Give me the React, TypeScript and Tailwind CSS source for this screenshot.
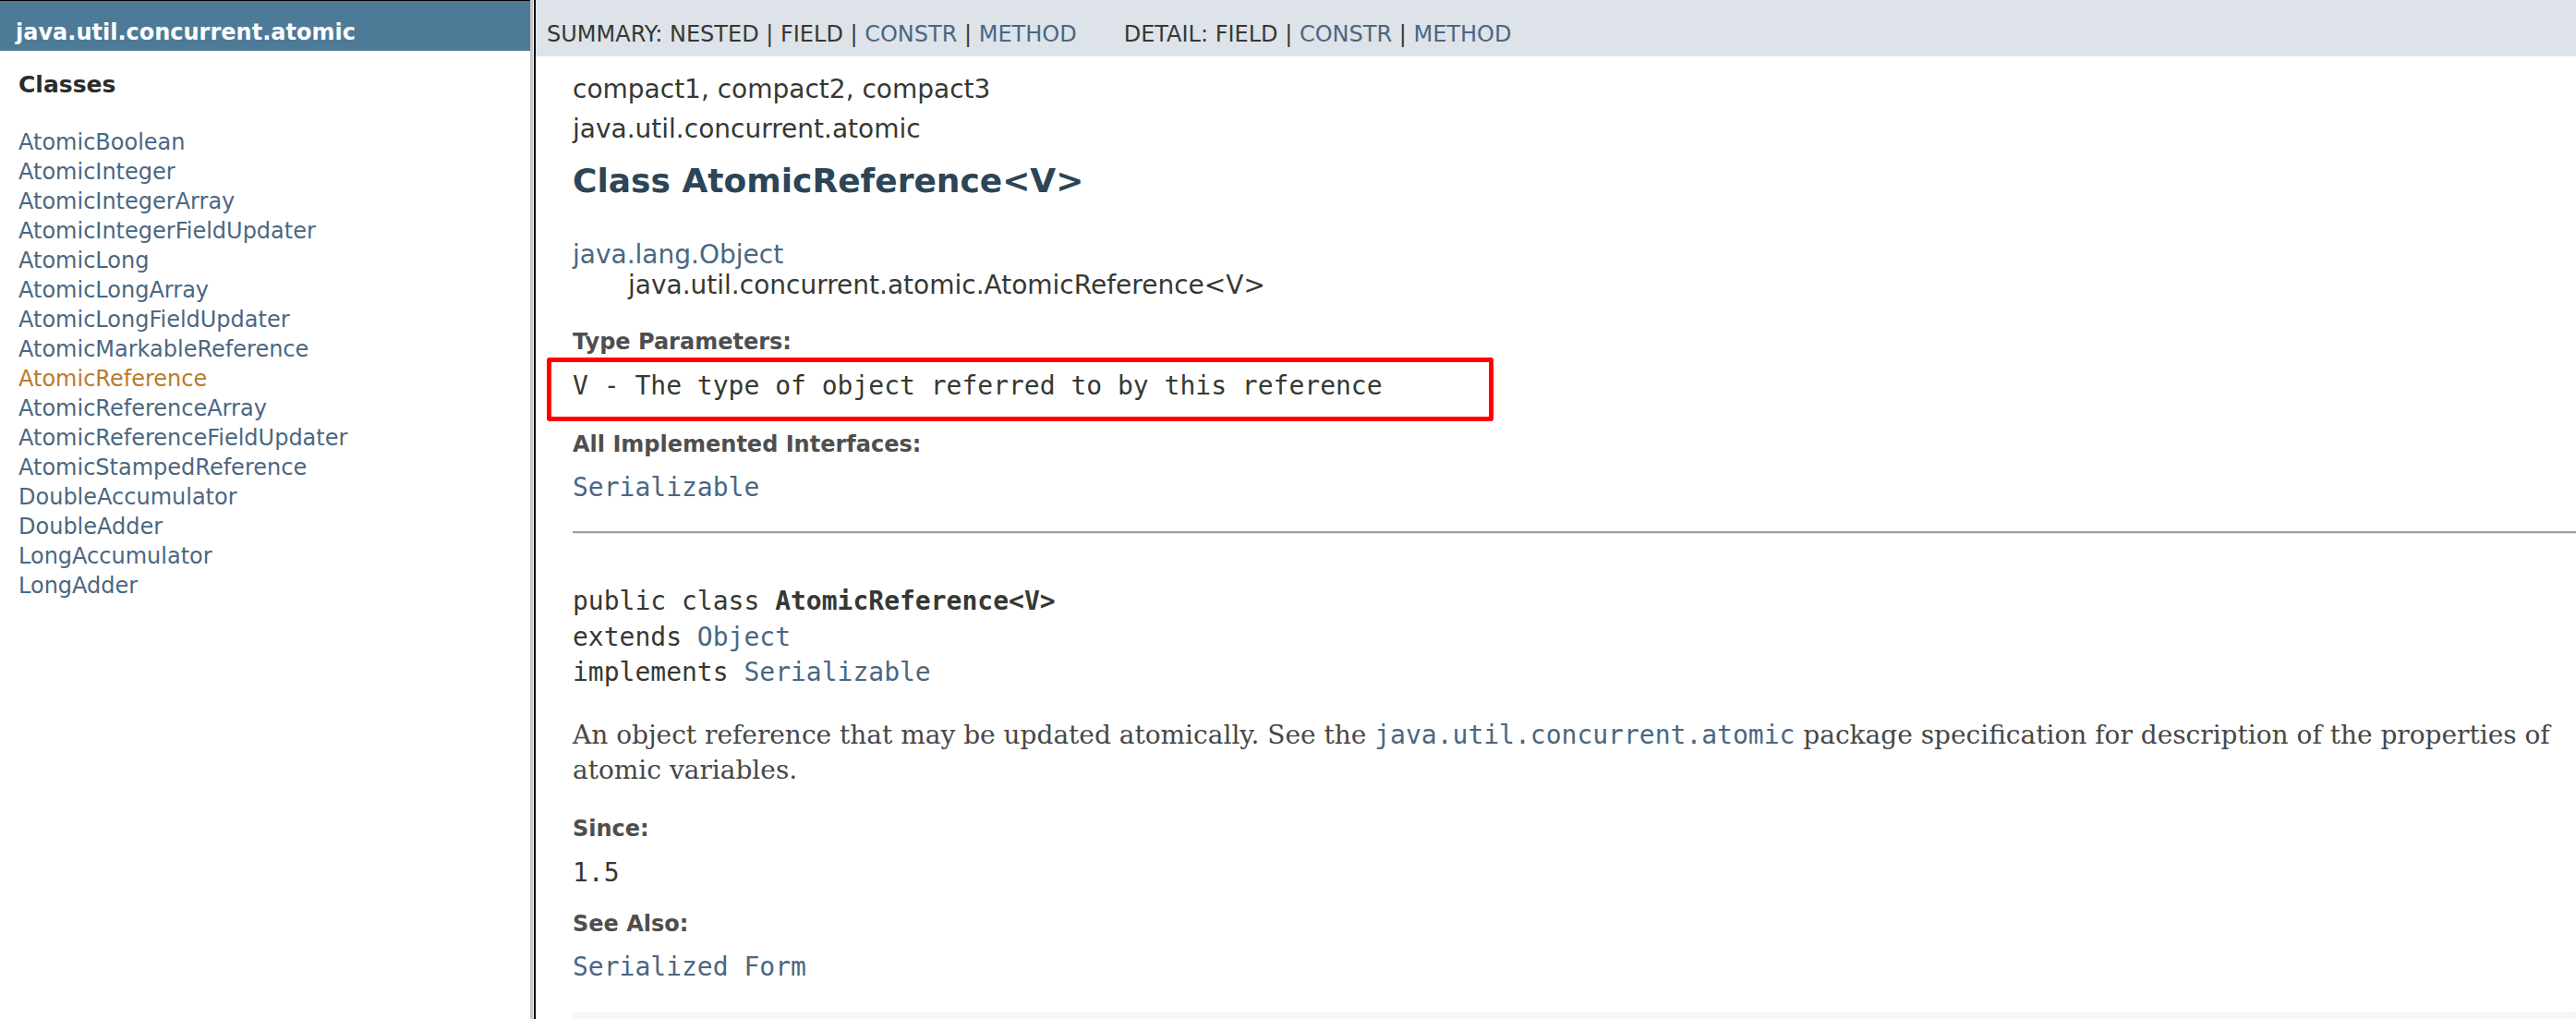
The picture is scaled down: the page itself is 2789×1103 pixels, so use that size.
import React from 'react';

const CLASSES = [
  'AtomicBoolean',
  'AtomicInteger',
  'AtomicIntegerArray',
  'AtomicIntegerFieldUpdater',
  'AtomicLong',
  'AtomicLongArray',
  'AtomicLongFieldUpdater',
  'AtomicMarkableReference',
  'AtomicReference',
  'AtomicReferenceArray',
  'AtomicReferenceFieldUpdater',
  'AtomicStampedReference',
  'DoubleAccumulator',
  'DoubleAdder',
  'LongAccumulator',
  'LongAdder',
];

const mono = "font-['DejaVu_Sans_Mono','Liberation_Mono',monospace]";

function Label({ children, className = '' }: { children: React.ReactNode; className?: string }) {
  return <dt className={`text-[24px] font-bold leading-[28px] text-[#4e4e4e] ${className}`}>{children}</dt>;
}

export default function App() {
  return (
    <div className="flex h-[1103px] w-[2789px] overflow-hidden bg-white font-['DejaVu_Sans','Liberation_Sans',sans-serif] text-[#353833]">
      {/* Package frame */}
      <aside className="w-[574px] shrink-0 border-t border-black">
        <div className="h-[54px] bg-[#4d7a97] pl-[17px] pt-[20px] text-[24px] font-bold leading-[28px] text-white">
          java.util.concurrent.atomic
        </div>
        <h2 className="mt-[22px] pl-[20px] text-[25px] font-bold leading-[29px] text-[#2c2c2c]">Classes</h2>
        <ul className="mt-[30px] pl-[20px]">
          {CLASSES.map(c => (
            <li
              key={c}
              className={`pt-[4px] text-[24px] leading-[28px] ${c === 'AtomicReference' ? 'text-[#bb7a2a]' : 'text-[#4a6782]'}`}
            >
              {c}
            </li>
          ))}
        </ul>
      </aside>

      {/* Frame divider */}
      <div className="w-[3px] shrink-0 bg-[#c8c8c8]" />
      <div className="w-px shrink-0 bg-white" />
      <div className="w-[2px] shrink-0 bg-black" />

      {/* Class frame */}
      <main className="min-w-0 flex-1">
        <div className="flex h-[61px] gap-[51px] bg-[#dee3e9] pl-[12px] pt-[23px] text-[24px] leading-[28px] whitespace-pre">
          <div>
            SUMMARY: NESTED | FIELD | <span className="text-[#4a6782]">CONSTR</span> | <span className="text-[#4a6782]">METHOD</span>
          </div>
          <div>
            DETAIL: FIELD | <span className="text-[#4a6782]">CONSTR</span> | <span className="text-[#4a6782]">METHOD</span>
          </div>
        </div>

        <div className="pl-[40px]">
          <div className="mt-[19px] text-[28px] leading-[33px]">compact1, compact2, compact3</div>
          <div className="mt-[10px] text-[28px] leading-[33px]">java.util.concurrent.atomic</div>
          <h1 className="mt-[19px] text-[36px] font-bold leading-[42px] text-[#2c4557]">Class AtomicReference&lt;V&gt;</h1>

          <div className="mt-[42px] text-[28px] leading-[33px] text-[#4a6782]">java.lang.Object</div>
          <div className="ml-[60px] text-[28px] leading-[33px]">java.util.concurrent.atomic.AtomicReference&lt;V&gt;</div>

          <dl>
            <Label className="mt-[31px]">Type Parameters:</Label>
            <dd className={`relative mt-[17px] text-[28px] leading-[33px] ${mono}`}>
              V - The type of object referred to by this reference
              <span className="absolute left-[-28px] top-[-14px] h-[69px] w-[1025px] rounded-[3px] border-[5px] border-[#ff0000]" />
            </dd>
            <Label className="mt-[33px]">All Implemented Interfaces:</Label>
            <dd className={`mt-[16px] text-[28px] leading-[33px] text-[#4a6782] ${mono}`}>Serializable</dd>
          </dl>

          <div className="mt-[31px] h-[3px] border-t-2 border-[#9d9d9d] bg-[#ededed]" />

          <div className={`mt-[54px] text-[28px] leading-[38.5px] ${mono}`}>
            <div>
              public class <span className="font-bold">AtomicReference&lt;V&gt;</span>
            </div>
            <div>
              extends <span className="text-[#4a6782]">Object</span>
            </div>
            <div>
              implements <span className="text-[#4a6782]">Serializable</span>
            </div>
          </div>

          <div className="mt-[29px] pr-[20px] font-['DejaVu_Serif','Liberation_Serif',serif] text-[28px] leading-[38.3px] text-[#474747]">
            An object reference that may be updated atomically. See the{' '}
            <code className={`text-[#4a6782] ${mono}`}>java.util.concurrent.atomic</code> package specification for
            description of the properties of atomic variables.
          </div>

          <dl>
            <Label className="mt-[30px]">Since:</Label>
            <dd className={`mt-[17px] text-[28px] leading-[33px] ${mono}`}>1.5</dd>
            <Label className="mt-[25px]">See Also:</Label>
            <dd className={`mt-[16px] text-[28px] leading-[33px] text-[#4a6782] ${mono}`}>Serialized Form</dd>
          </dl>

          <div className="mt-[33px] h-[60px] border border-[#ededed] bg-[#f8f8f8]" />
        </div>
      </main>
    </div>
  );
}
